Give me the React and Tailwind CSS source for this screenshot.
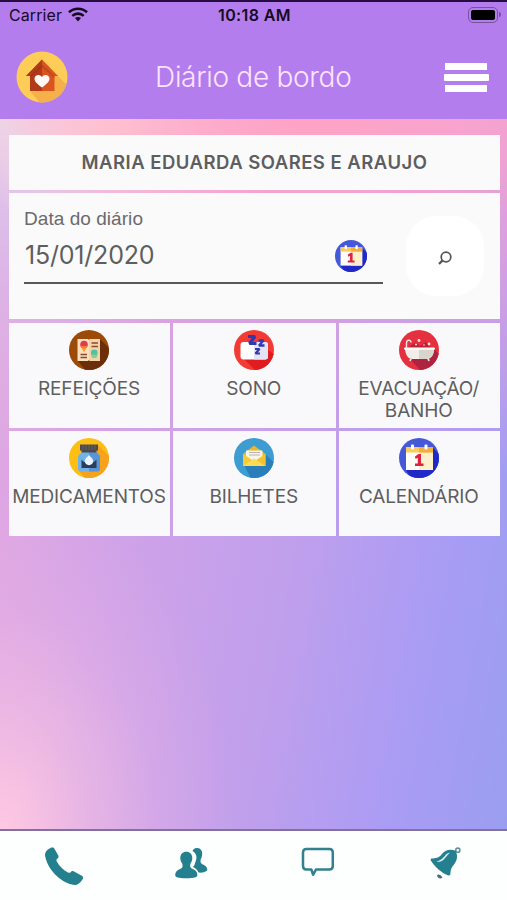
import React from 'react'

function HomeIcon(){
  return (
    <svg viewBox="0 0 52 52" className="w-[52px] h-[52px]">
      <defs>
        <clipPath id="home-c"><circle cx="26" cy="26" r="25.5" /></clipPath>
      </defs>
      <g clipPath="url(#home-c)">
        <rect width="52" height="52" fill="#fdcd58" />
        <path d="M41 24L60 43V60H31L14 40z" fill="#f5b04a" />
        <path d="M10 25L26 8.500L42 25H38.500V40H14V25z" fill="#d9541e" />
        <path d="M10 25L26 8.500V40H14V25z" fill="#b03a1a" />
        <path d="M14 25L26 13.500L38.500 25V27L26 16L14 27z" fill="#8f2d14" opacity="0.35" />
        <path d="M26 36.500C21 33 18.500 30.500 18.500 27.800C18.500 23.500 24 22.500 26 26C28 22.500 33.500 23.500 33.500 27.800C33.500 30.500 31 33 26 36.500z" fill="#fffaf6" />
      </g>
    </svg>
  )
}

function CalendarIcon({ className }){
  return (
    <svg viewBox="0 0 40 40" className={className}>
      <defs>
        <clipPath id="cal-c"><circle cx="20" cy="20" r="20" /></clipPath>
      </defs>
      <g clipPath="url(#cal-c)">
        <rect width="40" height="40" fill="#4558d8" />
        <path d="M34 10L46 22V44H14L7 32z" fill="#2029c8" />
        <rect x="7" y="9" width="27" height="23" fill="#fffdf8" />
        <path d="M20 14H34V32H20z" fill="#fff0cd" />
        <rect x="7" y="9" width="27" height="5.500" fill="#fbcb60" />
        <rect x="20" y="9" width="14" height="5.500" fill="#f2ae3e" />
        <rect x="12" y="6.500" width="3" height="5" rx="1" fill="#fff" />
        <rect x="25.500" y="6.500" width="3" height="5" rx="1" fill="#fff" />
        <path d="M16 18.500L19.500 16H22V25.500H24.500V28H16V25.500H18.800V19.700L16.500 21z" fill="#dc2340" />
      </g>
    </svg>
  )
}

function MealsIcon(){
  return (
    <svg viewBox="0 0 40 40" className="w-10 h-10">
      <defs>
        <clipPath id="meal-c"><circle cx="20" cy="20" r="20" /></clipPath>
      </defs>
      <g clipPath="url(#meal-c)">
        <rect width="40" height="40" fill="#9c4a08" />
        <path d="M31 9L50 28V50H24L9 31z" fill="#6b2e08" />
        <path d="M8.500 9H19L20 10L21 9H31V31H21L20 30L19 31H8.500z" fill="#fbe0bd" />
        <path d="M20 10L21 9H31V31H21L20 30z" fill="#f5d3aa" />
        <path d="M11.500 16H18.500L15 22.500z" fill="#f6a12c" />
        <circle cx="15" cy="14.500" r="3.800" fill="#e33a50" />
        <path d="M12 16H18V18H12z" fill="#f47c3c" />
        <path d="M22.500 13H29M22.500 16.500H29M11.500 24.500H18M11.500 27.500H18" stroke="#8a4936" strokeWidth="1.600" />
        <path d="M22 25V22C22 18.800 28.500 18.800 28.500 22V25z" fill="#4dc3a4" />
        <path d="M22 24.500H28.500L27.500 28H23z" fill="#8fc890" />
      </g>
    </svg>
  )
}

function SleepIcon(){
  return (
    <svg viewBox="0 0 40 40" className="w-10 h-10">
      <defs>
        <clipPath id="sleep-c"><circle cx="20" cy="20" r="20" /></clipPath>
      </defs>
      <g clipPath="url(#sleep-c)">
        <rect width="40" height="40" fill="#f23b35" />
        <path d="M9 28L21 40H40V24L34 20z" fill="#e01c20" />
        <rect x="6.500" y="12" width="27.500" height="17.500" rx="3" fill="#fff" />
        <path d="M20 12H31C33 12 34 13 34 15V26.500C34 28.500 33 29.500 31 29.500H20z" fill="#e2e4f5" />
        <g fill="none" stroke="#3438b0" strokeLinejoin="bevel">
          <path d="M14 6.500H21L15.500 13.500H22.500" strokeWidth="3.200" />
          <path d="M24.500 10.500H29.500L25 15.500H30.500" strokeWidth="2.300" />
          <path d="M21 19H25.500L21.500 23.500H26" strokeWidth="2.200" />
        </g>
      </g>
    </svg>
  )
}

function BathIcon(){
  return (
    <svg viewBox="0 0 40 40" className="w-10 h-10">
      <defs>
        <clipPath id="bath-c"><circle cx="20" cy="20" r="20" /></clipPath>
      </defs>
      <g clipPath="url(#bath-c)">
        <rect width="40" height="40" fill="#e5303f" />
        <path d="M35 19L42 26V42H23L11 29z" fill="#ad2340" />
        <path d="M10 17L17 12L21 16L27 12L32 18z" fill="#bd2038" />
        <path d="M7.500 18V13C7.500 9.500 12 9.500 12 12.500" fill="none" stroke="#efeae6" strokeWidth="1.400" />
        <path d="M6 19H35C35 26 31 29 27.500 29H13.500C9 29 6.500 25 6 19z" fill="#f1eeea" />
        <path d="M20 19H35C35 26 31 29 27.500 29H20z" fill="#d8d4ce" />
        <rect x="5" y="17.500" width="31" height="2.300" rx="1.100" fill="#fffaf5" />
        <path d="M12 28.500L11 31M29 28.500L30 31" stroke="#eee6e0" strokeWidth="1.800" />
        <circle cx="20" cy="10.500" r="1.400" fill="#fbdcdc" />
        <circle cx="17" cy="14.500" r="1" fill="#fbdcdc" />
        <circle cx="30" cy="14" r="1.400" fill="#fbdcdc" />
        <circle cx="25" cy="15" r="0.800" fill="#fbdcdc" />
      </g>
    </svg>
  )
}

function MedicineIcon(){
  return (
    <svg viewBox="0 0 40 40" className="w-10 h-10">
      <defs>
        <clipPath id="med-c"><circle cx="20" cy="20" r="20" /></clipPath>
      </defs>
      <g clipPath="url(#med-c)">
        <rect width="40" height="40" fill="#fdbf14" />
        <path d="M29 7L50 28V50H24L10 33z" fill="#f6a21c" />
        <path d="M13 13.500H27C27 15.500 31 16 31 19.500V30.500C31 32.500 30 33.500 28 33.500H12C10 33.500 9 32.500 9 30.500V19.500C9 16 13 15.500 13 13.500z" fill="#72b2ea" />
        <path d="M20 13.500H27C27 15.500 31 16 31 19.500V30.500C31 32.500 30 33.500 28 33.500H20z" fill="#5795d6" />
        <path d="M11 6.500H29V12.500H27.500V14.500H12.500V12.500H11z" fill="#4b4a4e" />
        <path d="M14 7V12M17 7V12M20 7V12M23 7V12M26 7V12" stroke="#6f6764" strokeWidth="0.800" />
        <path d="M12.500 21.500L15 24H25L27.500 21.500V30H12.500z" fill="#2d3c5b" />
        <path d="M20 17C21.500 19 24.200 20.500 24.200 23.300C24.200 25.600 22.300 27.200 20 27.200C17.700 27.200 15.800 25.600 15.800 23.300C15.800 20.500 18.500 19 20 17z" fill="#e9f4ff" />
      </g>
    </svg>
  )
}

function NotesIcon(){
  return (
    <svg viewBox="0 0 40 40" className="w-10 h-10">
      <defs>
        <clipPath id="note-c"><circle cx="20" cy="20" r="20" /></clipPath>
      </defs>
      <g clipPath="url(#note-c)">
        <rect width="40" height="40" fill="#3d9cd2" />
        <path d="M31 16L50 34V50H22L10 27z" fill="#2a7fba" />
        <path d="M9 16L20 7.500L31.500 16V28H9z" fill="#e6b731" />
        <path d="M12 12.500H28.500V21L20 25L12 21z" fill="#f7f4ec" />
        <path d="M15 14.500H26M15 17H26" stroke="#b9b5ae" strokeWidth="1.100" />
        <path d="M9 16L19 22.500L9 28z" fill="#f6cb38" />
        <path d="M31.500 16L21.500 22.500L31.500 28z" fill="#f4c22c" />
        <path d="M9 28L20 20.500L31.500 28z" fill="#fbdc55" />
      </g>
    </svg>
  )
}

function WifiIcon(){
  return (
    <svg viewBox="0 0 20 15" className="w-5 h-[15px]" fill="none" stroke="#160a22" strokeWidth="2.600">
      <path d="M1 5.300C6 0.600 14 0.600 19 5.300" />
      <path d="M4.300 8.900C7.500 5.900 12.500 5.900 15.700 8.900" />
      <path d="M7 11L10 14.500L13 11C11.200 9.500 8.800 9.500 7 11z" fill="#160a22" stroke="none" />
    </svg>
  )
}

function PhoneIcon(){
  return (
    <svg viewBox="0 0 40 40" className="w-10 h-10" fill="#24808f">
      <path d="M8.300 1.200C9.300 1.200 10 2 10.600 3L14.300 9.500C15 11 14.300 12 13.300 12.700C12.200 13.500 12.300 14.300 12.800 15.400C15 20 19.500 24 24 26.500C25.200 27 26 26.900 26.800 25.900C27.600 24.900 28.700 24.700 30 25.400L37.800 29.800C39.500 30.800 39.400 31.700 38.600 33.200C35.800 38.200 32.500 39.700 28 38.600C15.500 35.600 4 23.500 1.200 10.500C0.300 6 3.500 2.800 8.300 1.200z" />
    </svg>
  )
}

function PeopleIcon(){
  return (
    <svg viewBox="0 0 34 34" className="w-[34px] h-[34px]" fill="#24808f">
      <path d="M18.500 5C19.500 2.600 21.300 1.700 23.300 2C26.600 2.300 28.400 4.800 28.200 8.200C28 10.800 27.200 12.400 26.600 13.700C26 16.500 27.200 17.600 29.500 18.800C32 20 33.500 21.700 33.200 24.500C30.500 26.500 27.500 27 24.500 26.600C23.600 23.800 21.600 22.300 18.900 21C20.900 19.700 20.700 17.700 21.600 15.600C23.400 11.400 22.500 7.200 18.500 5z" />
      <path d="M12.300 5.800C16 5.800 18.300 8.500 18.300 12C18.300 14.500 17.300 16.200 16.500 17.500C15.500 20.500 16.300 22 18.800 23C21.600 24.100 23.400 26 23.400 29C23.400 31.300 20.500 32.300 12.300 32.300C4 32.300 1.200 31.300 1.200 29C1.200 26 3.200 24.100 6 23C8.500 22 9.200 20.500 8.200 17.500C7.300 16.200 6.300 14.500 6.300 12C6.300 8.500 8.600 5.800 12.300 5.800z" />
    </svg>
  )
}

function ChatIcon(){
  return (
    <svg viewBox="0 0 34 34" className="w-[34px] h-[34px]" fill="none" stroke="#33808f" strokeWidth="2.500" strokeLinejoin="round">
      <path d="M5.500 3H28.300C30.500 3 31.800 4.300 31.800 6.500V20C31.800 22.200 30.500 23.500 28.300 23.500H15L12.200 28.700L10.300 23.500H5.500C3.300 23.500 2 22.200 2 20V6.500C2 4.300 3.300 3 5.500 3z" />
    </svg>
  )
}

function BellIcon(){
  return (
    <svg viewBox="0 0 34 34" className="w-[34px] h-[34px]">
      <circle cx="28.800" cy="4.200" r="2.100" fill="none" stroke="#5e929c" strokeWidth="1.600" />
      <path d="M8 29.500C8.500 27.500 12 28.500 13.500 31.500C11.500 33.300 8.800 32.500 8 29.500z" fill="#4e6d79" />
      <path d="M26.500 4.800C21 2.300 15.500 4.500 12.500 8.500C10 12 6.500 12.300 2.500 12.500C1.300 13 1.500 14.200 2.300 15.300C6.500 21.500 12.500 26.800 18.800 29.300C20.600 29.800 21.300 29.200 21.400 27.800C21.600 24 22.300 21.500 25 18.500C28.200 14.500 29.200 10 26.500 4.800z" fill="#24808f" />
      <path d="M7.500 15.500C12 14.500 14 12 16.200 9.500C17.600 7.800 19.300 6.800 21 6.800C18.500 9 17 11 15.300 12.900C13 15.300 10.500 16.200 7.500 15.500z" fill="#d9f2f5" />
    </svg>
  )
}

const tiles = [
  { label: 'REFEIÇÕES', icon: <MealsIcon /> },
  { label: 'SONO', icon: <SleepIcon /> },
  { label: <>EVACUAÇÃO/<br />BANHO</>, icon: <BathIcon /> },
  { label: 'MEDICAMENTOS', icon: <MedicineIcon /> },
  { label: 'BILHETES', icon: <NotesIcon /> },
  { label: 'CALENDÁRIO', icon: <CalendarIcon className="w-10 h-10" /> },
]

export default function App(){
  return (
    <div className="w-[507px] h-[900px] flex flex-col overflow-hidden font-['Inter',sans-serif] text-[#5e5e60]">
      <header className="h-[119px] bg-[#b47ded] border-t-2 border-[#260c43] flex flex-col">
        <div className="h-[25px] pl-[9px] pr-[6px] grid grid-cols-3 items-center text-[#160a22]">
          <div className="flex items-center gap-[6px]">
            <span className="text-[16px] tracking-[0.1px]">Carrier</span>
            <WifiIcon />
          </div>
          <div className="text-center text-[16px] font-semibold tracking-[0.4px] whitespace-nowrap pr-px">10:18 AM</div>
          <div className="flex items-center justify-end gap-px">
            <div className="w-[30px] h-4 p-[2px] rounded-[5px] border border-[#775299]">
              <div className="w-full h-full rounded-[2px] bg-black"></div>
            </div>
            <div className="w-[2px] h-[5px] rounded-r bg-[#775299]"></div>
          </div>
        </div>
        <div className="h-[91px] pt-[9px] pl-[15.5px] pr-[18px] flex items-center justify-between">
          <button><HomeIcon /></button>
          <h1 className="text-[28px] font-light tracking-[-0.3px] text-[#fbe4ff] whitespace-nowrap pr-[5px]">Diário de bordo</h1>
          <button className="w-[45px] flex flex-col items-center gap-[4px]">
            <span className="w-[42px] h-[7px] bg-white"></span>
            <span className="w-[45px] h-[7px] bg-white rounded-[1px]"></span>
            <span className="w-[42px] h-[7px] bg-white"></span>
          </button>
        </div>
      </header>

      <main className="h-[710px] pl-[9px] pr-[7px] pt-[15.5px] bg-[radial-gradient(ellipse_300px_130px_at_60%_0%,#ffa3c4_0%,#ffa6c8a0_50%,transparent_100%),radial-gradient(ellipse_200px_110px_at_24%_0%,#ffd6d6_0%,#ffd7dca0_50%,transparent_100%),radial-gradient(ellipse_240px_340px_at_0%_100%,#ffc8e2_0%,#fac5e290_35%,#f3bce240_65%,transparent_100%),radial-gradient(ellipse_200px_350px_at_0%_0%,#dccdf0_0%,#dabceaa0_50%,transparent_100%),linear-gradient(180deg,#eca0d6_0%,#e3a1dbd0_18%,transparent_50%),linear-gradient(100deg,#e5a8e0_0%,#d0a2e8_30%,#c09fec_58%,#a99cf4_82%,#9a9ef1_100%)]">
        <div className="h-[55px] pt-[2px] bg-[#fafafa] flex items-center justify-center text-[18.500px] font-semibold tracking-[0.48px]">
          MARIA EDUARDA SOARES E ARAUJO
        </div>

        <section className="mt-[3px] h-[126px] bg-[#fafafa] pl-[15px] pr-[15px] flex">
          <div className="w-[359px] mt-[14px]">
            <label className="block h-6 leading-6 text-[19px] tracking-[0.05px] font-['Liberation_Sans',sans-serif] text-[#6a6a6c]">Data do diário</label>
            <div className="h-[53px] flex items-center justify-between pr-[16px] border-b-2 border-[#58585a]">
              <span className="text-[25px] tracking-[-0.2px] pl-[1px]">15/01/2020</span>
              <CalendarIcon className="w-8 h-8" />
            </div>
          </div>
          <button className="ml-[23px] mt-[23px] w-[78px] h-[80px] shrink-0 rounded-[30px] bg-white flex items-center justify-center">
            <svg viewBox="0 0 14 14" className="w-[14px] h-[14px] mt-[5px] mr-px" fill="none" stroke="#555" strokeWidth="1.700">
              <circle cx="8" cy="6" r="4.800" />
              <path d="M4.600 9.400L1 13" strokeWidth="2.200" />
            </svg>
          </button>
        </section>

        <div className="mt-[4.5px] grid grid-cols-[161px_162.5px_161.5px] gap-[3px]">
          {tiles.map((t, i)=> (
            <button key={i} className="h-[105px] pt-[6.5px] pr-px bg-[#f9f9fb] flex flex-col items-center">
              {t.icon}
              <span className="mt-[8px] text-[19px] leading-[22px] tracking-[-0.15px] text-center whitespace-nowrap">{t.label}</span>
            </button>
          ))}
        </div>
      </main>

      <nav className="h-[71px] bg-[#fdfefe] border-t-2 border-[#84709f] grid grid-cols-4">
        <button className="flex justify-center pt-[15px] pl-px"><PhoneIcon /></button>
        <button className="flex justify-center pt-[15px] pl-px"><PeopleIcon /></button>
        <button className="flex justify-center pt-[15px] pl-[2px]"><ChatIcon /></button>
        <button className="flex justify-center pt-[15px] pl-[4px]"><BellIcon /></button>
      </nav>
    </div>
  )
}
